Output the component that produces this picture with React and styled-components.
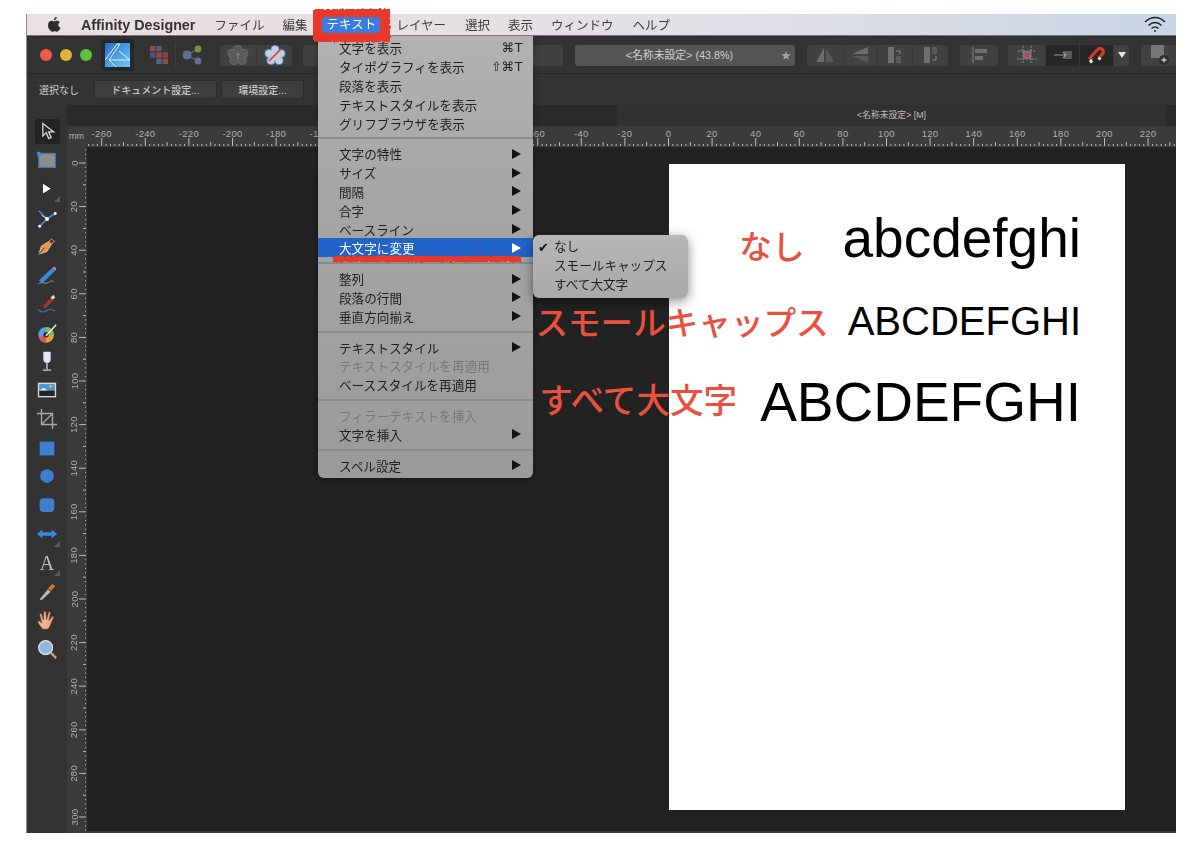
import React from 'react'
import styled, { createGlobalStyle } from 'styled-components'

const SANS = `"Liberation Sans", "Noto Sans CJK JP", sans-serif`

const Global = createGlobalStyle`
  html, body { margin: 0; background: #fff; }
  body { font-family: ${SANS}; }
`

const Screen = styled.div`
  width: 1200px;
  height: 847px;
  padding: 14px 24px 14px 27px;
  box-sizing: border-box;
  overflow: hidden;
  filter: blur(0.3px);
`

const Win = styled.div`
  position: relative;
  display: flex;
  flex-direction: column;
  height: 819px;
  background: #333;
  box-shadow: -1px 0 0 #8c8c8c;
`

/* menu bar */
const MenuBar = styled.div`
  position: relative;
  z-index: 3;
  flex: none;
  display: flex;
  align-items: center;
  height: 21px;
  padding-left: 20px;
  background: linear-gradient(90deg, #eadfe2 0%, #e6dfe4 40%, #e2e0e8 60%, #d6dbe6 80%, #c8d4e6 100%);
  border-bottom: 1px solid #777;
  color: #3a3a3a;
  font-size: 12.5px;
`

const AppName = styled.span`
  margin: 0 19px 0 20px;
  font-size: 14.3px;
  font-weight: 700;
  color: #333;
`

const MenuTitle = styled.span`
  position: relative;
  margin-right: ${p => p.$mr || 18}px;
  white-space: nowrap;
`

const ActiveTitle = styled.span`
  position: relative;
  display: block;
  width: 58px;
  height: 16px;
  margin: 0 16px 0 14px;
  line-height: 16px;
  text-align: center;
  color: #fff;
  background: #3a7be0;
  border-radius: 3px;
  &::before {
    content: '';
    position: absolute;
    inset: -8px -10px -9px -9px;
    z-index: -1;
    background: #e8392b;
    filter: url(#rough);
  }
`

const WifiWrap = styled.span`
  margin-left: auto;
  margin-right: 10px;
  display: flex;
`

/* top toolbar */
const Toolbar = styled.div`
  flex: none;
  display: flex;
  align-items: center;
  height: 38px;
  padding-left: 13px;
  background: #333;
  border-top: 1px solid #2a2a2a;
  border-bottom: 1px solid #2a2a2a;
  box-sizing: border-box;
  overflow: hidden;
`

const Lights = styled.div`
  display: flex;
  gap: 8px;
  margin-right: 9px;
`

const Light = styled.span`
  width: 12px;
  height: 12px;
  border-radius: 50%;
  background: ${p => p.$c};
`

const LogoBox = styled.div`
  display: flex;
  align-items: center;
  justify-content: center;
  width: 33px;
  height: 32px;
  background: #272727;
  border-radius: 3px;
`

const Plain = styled.div`
  display: flex;
  align-items: center;
  justify-content: center;
  width: ${p => p.$w}px;
  margin-left: ${p => p.$ml || 0}px;
`

const VRule = styled.span`
  width: 1px;
  height: 24px;
  margin-left: ${p => p.$ml || 0}px;
  background: #3e3e3e;
`

const Group = styled.div`
  flex: none;
  display: flex;
  height: 21px;
  margin-left: ${p => p.$ml}px;
  border-radius: 3px;
  overflow: hidden;
  background: #414141;
`

const Seg = styled.div`
  display: flex;
  align-items: center;
  justify-content: center;
  width: ${p => p.$w}px;
  background: ${p => (p.$dark ? '#272727' : 'transparent')};
  border-left: ${p => (p.$first ? 'none' : '1px solid #383838')};
  box-sizing: border-box;
`

const DropArrow = styled.span`
  width: 0;
  height: 0;
  border-top: 6px solid #e4e4e4;
  border-left: 4px solid transparent;
  border-right: 4px solid transparent;
`

const TitleBox = styled.div`
  position: relative;
  flex: none;
  width: 220px;
  height: 21px;
  margin-left: 12px;
  padding-right: 11px;
  box-sizing: border-box;
  line-height: 21px;
  text-align: center;
  font-size: 10.8px;
  color: #cfcfcf;
  background: #555;
  border-radius: 3px;
`

const Star = styled.span`
  position: absolute;
  right: 4px;
  top: 0;
  font-size: 10px;
  color: #a4a4a4;
`

/* context bar */
const ContextBar = styled.div`
  flex: none;
  display: flex;
  align-items: center;
  height: 31px;
  padding-left: 12px;
  background: #333;
  font-size: 10px;
  color: #d0d0d0;
`

const ContextLabel = styled.span`
  width: 47px;
`

const ContextBtn = styled.div`
  width: ${p => p.$w}px;
  height: 19px;
  margin-left: ${p => p.$ml}px;
  line-height: 19px;
  text-align: center;
  font-weight: 500;
  color: #c8c8c8;
  background: #3e3e3e;
  border: 1px solid #2c2c2c;
  border-radius: 2px;
  box-sizing: border-box;
`

/* body */
const Body = styled.div`
  flex: 1;
  min-height: 0;
  display: flex;
`

const ToolColumn = styled.div`
  flex: none;
  display: flex;
  flex-direction: column;
  width: 40px;
  padding-top: 12px;
  box-sizing: border-box;
  background: #333;
`

const Tool = styled.div`
  position: relative;
  display: flex;
  align-items: center;
  justify-content: center;
  height: 28.75px;
`

const ToolInner = styled.div`
  display: flex;
  align-items: center;
  justify-content: center;
  width: 25px;
  height: 25px;
  border-radius: 3px;
  background: ${p => (p.$on ? '#232323' : 'transparent')};
`

const Corner = styled.span`
  position: absolute;
  right: 7px;
  bottom: 1px;
  width: 0;
  height: 0;
  border-left: 6px solid transparent;
  border-bottom: 6px solid #5c5c5c;
`

const LetterA = styled.span`
  font-family: "Liberation Serif", serif;
  font-size: 20px;
  line-height: 1;
  color: #bdbdbd;
`

const Main = styled.div`
  flex: 1;
  min-width: 0;
  display: flex;
  flex-direction: column;
`

const TabBar = styled.div`
  flex: none;
  display: flex;
  height: 21px;
  background: #2a2a2a;
`

const TabSpacer = styled.div`
  width: 550px;
`

const Tab = styled.div`
  width: 549px;
  line-height: 21px;
  text-align: center;
  font-size: 8.8px;
  color: #bdbdbd;
  background: #313131;
`

const RulerTop = styled.div`
  flex: none;
  display: flex;
  height: 21px;
  background: #3b3b3b;
`

const RulerUnit = styled.span`
  width: 20px;
  padding: 5px 0 0 2px;
  box-sizing: border-box;
  font-size: 9px;
  color: #b4b4b4;
`

const Work = styled.div`
  flex: 1;
  min-height: 0;
  display: flex;
  border-bottom: 2px solid #3a3a3a;
`

const RulerSide = styled.div`
  flex: none;
  width: 20px;
  background: #3b3b3b;
  overflow: hidden;
`

const Canvas = styled.div`
  flex: 1;
  min-width: 0;
  padding: 17px 0 0 582px;
  background: #222;
`

const Page = styled.div`
  display: flex;
  flex-direction: column;
  width: 456px;
  height: 646px;
  padding: 44px 44px 0 0;
  box-sizing: border-box;
  background: #fff;
`

const Sample = styled.div`
  display: flex;
  flex-direction: row;
  justify-content: flex-end;
  align-items: center;
  margin-top: ${p => p.$mt || 0}px;
  height: ${p => p.$lh}px;
  white-space: nowrap;
`

const Note = styled.span`
  flex: none;
  margin: ${p => p.$shift}px ${p => p.$gap}px 0 0;
  font-family: "Noto Sans CJK JP", sans-serif;
  font-size: ${p => p.$size || 32.6}px;
  font-weight: 500;
  line-height: 1.2;
  color: #e9503f;
`

const SampleText = styled.span`
  flex: none;
  font-size: ${p => p.$size}px;
  line-height: ${p => p.$lh}px;
  color: #000;
`

/* menus */
const Menu = styled.div`
  position: absolute;
  z-index: 2;
  left: 291px;
  top: 22px;
  width: 215px;
  padding: 2.5px 0 3.5px;
  background: linear-gradient(180deg, #b2b2b2 0%, #a6a6a6 35%, #9a9a9a 100%);
  border-radius: 0 0 6px 6px;
  box-shadow: 0 2px 6px rgba(0, 0, 0, 0.35);
  font-size: 12.6px;
  color: #1e1e1e;
`

const Item = styled.div`
  position: relative;
  display: flex;
  align-items: center;
  justify-content: space-between;
  height: 18.8px;
  padding: 0 ${p => (p.$short ? 10 : 12)}px 0 21px;
  color: ${p => (p.$off ? '#787878' : p.$on ? '#fff' : '#1e1e1e')};
  background: ${p => (p.$on ? '#2163c8' : 'transparent')};
`

const Arrow = styled.span`
  width: 0;
  height: 0;
  border-left: 9px solid ${p => (p.$on ? '#fff' : '#111')};
  border-top: 5px solid transparent;
  border-bottom: 5px solid transparent;
`

const Shortcut = styled.span`
  font-family: "DejaVu Sans", "Liberation Sans", sans-serif;
  font-size: 12.5px;
  letter-spacing: 0.5px;
`

const Sep = styled.div`
  height: 12px;
  display: flex;
  align-items: center;
  &::before {
    content: '';
    flex: 1;
    height: 2px;
    background: #8b8b8b;
  }
`

const Scribble = styled.span`
  position: absolute;
  left: 15px;
  right: 12px;
  bottom: -5px;
  height: 6px;
  background: #e8392b;
  filter: url(#rough);
`

const SubMenu = styled.div`
  position: absolute;
  z-index: 2;
  left: 506px;
  top: 221px;
  width: 155px;
  padding: 3px 0;
  background: linear-gradient(180deg, #b6b6b6, #a9a9a9);
  border-radius: 6px;
  box-shadow: 0 3px 12px rgba(0, 0, 0, 0.45);
  font-size: 12.6px;
  color: #1e1e1e;
`

const SubItem = styled.div`
  position: relative;
  height: 19px;
  padding-left: 21px;
  line-height: 19px;
`

const Check = styled.span`
  position: absolute;
  left: 5px;
  top: 0;
  font-family: "DejaVu Sans", sans-serif;
  font-size: 13px;
  color: #111;
`

const Hidden = styled.svg`
  position: absolute;
  width: 0;
  height: 0;
`

const Ic = ({ s = 22, children }) => (
  <svg width={s} height={s} viewBox="0 0 24 24" fill="none">{children}</svg>
)

/* tool icons */
const tools = [
  { on: true, el: <Ic s={20}><path d="M7 3v15l4-4 3 7 3-1-3-7h6z" fill="#2a2a2a" stroke="#ddd" strokeWidth="1.5" /></Ic> },
  { el: <Ic><rect x="3" y="5" width="18" height="15" fill="#8d8d8d" stroke="#3f86d6" strokeWidth="1.6" strokeDasharray="2.4 1.2" /><rect x="1" y="3" width="4" height="4" fill="#3f86d6" /></Ic> },
  { corner: true, el: <Ic s={18}><path d="M6 4v15l12-7.5z" fill="#fff" stroke="#111" strokeWidth="1" /></Ic> },
  { el: <Ic><path d="M3 4l9 9 9-6M12 13l-7 7" stroke="#4f8fd8" strokeWidth="1.5" /><path d="M12 13L6 9" stroke="#ddd" strokeWidth="1" /><circle cx="12" cy="13" r="2.2" fill="#fff" /><circle cx="21" cy="7" r="1.6" fill="#fff" /><circle cx="4" cy="21" r="1.6" fill="#fff" /></Ic> },
  { el: <Ic><path d="M3 21l3-9 8-5 3 3-5 8z" fill="#e8963c" stroke="#d8d8d8" strokeWidth=".8" /><path d="M3 21l6-7" stroke="#333" strokeWidth="1" /><path d="M14 7l3-3 3 3-3 3z" fill="#7d2b20" stroke="#ddd" strokeWidth=".7" /></Ic> },
  { el: <Ic><path d="M3 18L18 4l3 3L7 21z" fill="#3f86d6" /><path d="M18 4l3 3 1-2-2-2z" fill="#e88a9a" /><path d="M2 22c5-4 8 1 12-2s5-1 6 0" stroke="#999" strokeWidth="1" /></Ic> },
  { el: <Ic><path d="M7 15l10-11 3 3-10 10z" fill="#9c3a2a" /><path d="M16 5l3-3 2 3-3 2z" fill="#ddd" /><path d="M4 14c3-1 5 0 5 3l-4 1z" fill="#4a2c20" /><path d="M2 18c4 4 7 3 10 1s6-1 9 1" stroke="#2f6fc0" strokeWidth="1.4" /></Ic> },
  { el: <Ic><circle cx="11" cy="14" r="8.5" fill="#5aa0e0" /><path d="M11 14V5.5A8.5 8.5 0 0 1 19.5 14z" fill="#7cc04a" /><path d="M11 14h8.500A8.500 8.500 0 0 1 11 22.500z" fill="#e8a23c" /><path d="M11 14v8.500A8.500 8.500 0 0 1 3 17z" fill="#d9534f" /><circle cx="11" cy="14" r="3" fill="#333" /><path d="M11 15L22 3" stroke="#eee" strokeWidth="1.5" /></Ic> },
  { el: <Ic><path d="M8 2h8v8c0 3-1.500 4-4 4s-4-1-4-4z" fill="#e6e6f2" /><path d="M12 14v7M7.500 22h9" stroke="#cfcfcf" strokeWidth="1.500" /></Ic> },
  { el: <Ic><rect x="2" y="4" width="20" height="16" fill="#d8d8d8" /><rect x="3.500" y="5.500" width="17" height="7" fill="#4b9ad8" /><circle cx="16" cy="8" r="1.500" fill="#f0c040" /><rect x="3.500" y="12.500" width="17" height="6" fill="#222" /><path d="M3.500 12.500l5-3 4 3z" fill="#dfe9f2" /></Ic> },
  { el: <Ic><path d="M6 1v17h17M1 6h17v17M6 18L18 6" stroke="#a8a8a8" strokeWidth="1.500" /></Ic> },
  { el: <Ic><rect x="4" y="5" width="16" height="15" fill="#3f7fd0" /></Ic> },
  { el: <Ic><circle cx="12" cy="12" r="7.500" fill="#3f7fd0" /></Ic> },
  { el: <Ic><rect x="4" y="4.500" width="16" height="15" rx="4" fill="#3f7fd0" /></Ic> },
  { corner: true, el: <Ic><path d="M1 12l6-5v3h10V7l6 5-6 5v-3H7v3z" fill="#3f86d6" /></Ic> },
  { corner: true, el: <LetterA>A</LetterA> },
  { el: <Ic><path d="M4 21l9-11 3 3-10 9z" fill="#b8b8b8" /><path d="M13 9l5-5 3 3-5 5z" fill="#c9782c" /></Ic> },
  { el: <Ic><path d="M7 22c-2-3-5-6-5-8s2-1 4 1L4 6c0-1.500 2-1.500 2.500 0L8 12 8.500 3.500c0-1.500 2.500-1.500 2.500 0l.5 8 2-7.500c.5-1.500 2.500-1 2.200.5l-1.500 8 3-4c1-1.200 2.500 0 1.800 1.200L15 19c-1 2-2 3-3 3z" fill="#eeb08a" stroke="#5a3a2a" strokeWidth=".7" /></Ic> },
  { el: <Ic><circle cx="10.500" cy="10.500" r="7.500" fill="#8fb8e0" stroke="#ddd" strokeWidth="1.500" /><path d="M16 16l6 6" stroke="#c9a070" strokeWidth="2.500" /></Ic> },
]

/* rulers: 2.18px per unit */
const UNIT = 2.18

// these labels sit wholly behind the open menu
const behindMenu = [-140, -120, -100]

const RulerH = () => {
  const ticks = []
  for (let v = -266; v <= 232; v += 2) {
    const x = 581.5 + v * UNIT
    const h = v % 20 === 0 ? 8 : v % 10 === 0 ? 4 : 2
    ticks.push(<line key={v} x1={x} x2={x} y1={20 - h} y2={20} stroke="#bdbdbd" strokeWidth="1" />)
  }
  const labels = []
  for (let v = -260; v <= 220; v += 20) {
    if (behindMenu.includes(v)) continue
    labels.push(<text key={v} x={581.5 + v * UNIT} y={11} textAnchor="middle" fontSize="9.5" letterSpacing=".3" fill="#b0b0b0" fontFamily="Liberation Sans">{v}</text>)
  }
  return <svg width="1089" height="21">{ticks}{labels}</svg>
}

const RulerV = () => {
  const ticks = []
  for (let v = -6; v <= 310; v += 2) {
    const y = 16 + v * UNIT
    const w = v % 20 === 0 ? 8 : v % 10 === 0 ? 4 : 2
    ticks.push(<line key={v} x1={20 - w} x2={19} y1={y} y2={y} stroke="#bdbdbd" strokeWidth="1" />)
  }
  const labels = []
  for (let v = 0; v <= 300; v += 20) {
    const y = 16 + v * UNIT
    labels.push(<text key={v} x={7} y={y} transform={`rotate(-90 7 ${y})`} dy="3.500" textAnchor="middle" fontSize="9.5" letterSpacing=".3" fill="#b0b0b0" fontFamily="Liberation Sans">{v}</text>)
  }
  return <svg width="20" height="684">{ticks}{labels}</svg>
}

const Logo = () => (
  <svg width="25" height="24" viewBox="0 0 25 24">
    <defs>
      <linearGradient id="lg" x1="0" y1="0" x2="1" y2="1">
        <stop offset="0" stopColor="#2a6ac4" />
        <stop offset="0.55" stopColor="#4da2e6" />
        <stop offset="1" stopColor="#74c6f4" />
      </linearGradient>
    </defs>
    <rect width="25" height="24" fill="url(#lg)" />
    <path d="M0 17L12 1h3L4 17l7 7M4 17h21M14 8l11 9" stroke="#dff0ff" strokeWidth="1" fill="none" />
  </svg>
)

const Persona = () => (
  <svg width="20" height="20" viewBox="0 0 22 22" opacity=".8">
    <rect x="1" y="1" width="6" height="6" fill="#a5524e" />
    <rect x="8" y="1" width="6" height="6" fill="#5a6a8a" />
    <rect x="1" y="8" width="6" height="6" fill="#4f628a" />
    <rect x="8" y="8" width="6" height="6" fill="#b54a42" />
    <rect x="15" y="8" width="6" height="6" fill="#9c4a46" />
    <rect x="8" y="15" width="6" height="6" fill="#5f6f8f" />
    <rect x="15" y="15" width="6" height="6" fill="#a5524e" />
  </svg>
)

const Share = () => (
  <svg width="22" height="20" viewBox="0 0 22 20" opacity=".85">
    <path d="M6 10l11-6M6 10l11 6" stroke="#777" strokeWidth="1.200" />
    <circle cx="6" cy="10" r="4.500" fill="#5f7f9f" />
    <circle cx="17" cy="4" r="3.500" fill="#86a04a" />
    <circle cx="17" cy="16" r="3.500" fill="#6a7aa5" />
  </svg>
)

const PETALS = [[11, 4.5], [17, 8.5], [15, 15.5], [7, 15.5], [5, 8.5]]

const Flower = ({ c, slash }) => (
  <svg width="22" height="20" viewBox="0 0 22 20">
    {PETALS.map(([x, y]) => <circle key={x + '-' + y} cx={x} cy={y} r="4.5" fill={slash ? '#4f8fd8' : '#6a6a6a'} />)}
    {PETALS.map(([x, y]) => <circle key={x + '-' + y} cx={x} cy={y} r="3.6" fill={c} />)}
    <circle cx="11" cy="10.500" r="5" fill={c} />
    {slash
      ? <path d="M5 16L17 4" stroke="#d8402e" strokeWidth="1.600" />
      : <path d="M11 14V8M9 10l2-2 2 2" stroke="#888" strokeWidth="1" fill="none" />}
  </svg>
)

const Bars = ({ v }) => (
  <svg width="20" height="18" viewBox="0 0 20 18">
    {v === 'mirror' && <><path d="M9 2v14H1z" fill="#6e6e6e" /><path d="M11 2v14h8z" fill="#585858" /></>}
    {v === 'flip' && <><path d="M1 8h16V1z" fill="#6e6e6e" /><path d="M1 10h16v7z" fill="#585858" /></>}
    {v === 'rotR' && <><rect x="3" y="1" width="6" height="16" fill="#6e6e6e" /><rect x="11" y="10" width="5" height="7" fill="#5a5a5a" /><path d="M11 5h4v3" stroke="#888" fill="none" /></>}
    {v === 'rotL' && <><rect x="3" y="1" width="6" height="16" fill="#6e6e6e" /><rect x="11" y="1" width="5" height="7" fill="#5a5a5a" /><path d="M15 10v4h-4" stroke="#888" fill="none" /></>}
    {v === 'align' && <><path d="M4 1v16" stroke="#6e6e6e" strokeWidth="1.500" /><rect x="6" y="3" width="12" height="4" fill="#6e6e6e" /><rect x="6" y="10" width="8" height="4" fill="#6e6e6e" /></>}
  </svg>
)

const Snap = () => (
  <svg width="20" height="20" viewBox="0 0 20 20">
    <path d="M0 14h20M6 1v18M14 1v18M1 6h18" stroke="#8a8a8a" strokeWidth="1" strokeDasharray="2 1" />
    <rect x="6" y="6" width="8" height="8" fill="#777" />
    <rect x="8" y="8" width="4" height="4" fill="#e0352b" />
  </svg>
)

const Into = () => (
  <svg width="20" height="12" viewBox="0 0 20 12">
    <rect x="11" y="2" width="8" height="8" fill="#5a5a5a" />
    <path d="M1 6h12M10 3l3 3-3 3" stroke="#999" strokeWidth="1.200" fill="none" />
  </svg>
)

const Magnet = () => (
  <svg width="20" height="20" viewBox="0 0 20 20">
    <path d="M4 17l-2-2 7-8c2-2 4-2 5.500-.5s1 3.500-1 5.500l-3 3" stroke="#d8382c" strokeWidth="3" fill="none" transform="translate(1 -2)" />
    <path d="M3 15l2 2.500M11.500 12.500l2 2" stroke="#eee" strokeWidth="3" />
  </svg>
)

const AddPage = () => (
  <svg width="22" height="22" viewBox="0 0 22 22">
    <rect x="3" y="1" width="13" height="13" fill="#777" />
    <circle cx="16" cy="16" r="5" fill="#2e2e2e" />
    <path d="M13.500 16h5M16 13.500v5" stroke="#ccc" strokeWidth="1.300" />
  </svg>
)

const Wifi = () => (
  <svg width="22" height="17" viewBox="0 0 22 17" fill="none" stroke="#222" strokeWidth="1.400">
    <path d="M1 6c6-6 14-6 20 0M4.500 9.500c4-4 9-4 13 0M7.500 12.500c2-2 5-2 7 0" />
    <circle cx="11" cy="15" r="1" fill="#222" stroke="none" />
  </svg>
)

const AppleMark = () => (
  <svg width="14" height="16" viewBox="0 0 14 16" fill="#2b2b2b">
    <path d="M10.200 3.700c.9 0 2 .5 2.700 1.500-2.200 1.400-1.900 4.500.6 5.500-.5 1.500-2 4-3.400 4-.8 0-1.300-.5-2.300-.5s-1.600.5-2.300.5C3.800 14.700 1 11.500 1 8.200 1 5.300 3 3.800 4.800 3.800c.9 0 1.700.6 2.300.6s1.900-.7 3.100-.7z" />
    <path d="M9.800 0c.1 1.700-1.400 3.300-3 3.200C6.600 1.600 8.300.1 9.800 0z" />
  </svg>
)

const menu = [
  { t: '文字を表示', k: '⌘T' },
  { t: 'タイポグラフィを表示', k: '⇧⌘T' },
  { t: '段落を表示' },
  { t: 'テキストスタイルを表示' },
  { t: 'グリフブラウザを表示' },
  null,
  { t: '文字の特性', a: 1 },
  { t: 'サイズ', a: 1 },
  { t: '間隔', a: 1 },
  { t: '合字', a: 1 },
  { t: 'ベースライン', a: 1 },
  { t: '大文字に変更', a: 1, on: 1 },
  null,
  { t: '整列', a: 1 },
  { t: '段落の行間', a: 1 },
  { t: '垂直方向揃え', a: 1 },
  null,
  { t: 'テキストスタイル', a: 1 },
  { t: 'テキストスタイルを再適用', off: 1 },
  { t: 'ベーススタイルを再適用' },
  null,
  { t: 'フィラーテキストを挿入', off: 1 },
  { t: '文字を挿入', a: 1 },
  null,
  { t: 'スペル設定', a: 1 },
]

export default function App() {
  return (
    <>
      <Global />
      <Hidden>
        <filter id="rough" x="-10%" y="-30%" width="120%" height="160%">
          <feTurbulence type="fractalNoise" baseFrequency="0.35" numOctaves="2" seed="4" />
          <feDisplacementMap in="SourceGraphic" scale="3" />
        </filter>
      </Hidden>
      <Screen>
        <Win>
          <MenuBar>
            <AppleMark />
            <AppName>Affinity Designer</AppName>
            <MenuTitle>ファイル</MenuTitle>
            <MenuTitle $mr={1}>編集</MenuTitle>
            <ActiveTitle>テキスト</ActiveTitle>
            <MenuTitle $mr={19}>レイヤー</MenuTitle>
            <MenuTitle>選択</MenuTitle>
            <MenuTitle>表示</MenuTitle>
            <MenuTitle $mr={19}>ウィンドウ</MenuTitle>
            <MenuTitle>ヘルプ</MenuTitle>
            <WifiWrap><Wifi /></WifiWrap>
          </MenuBar>

          <Toolbar>
            <Lights>
              <Light $c="#f2574e" />
              <Light $c="#e2b33c" />
              <Light $c="#5fc040" />
            </Lights>
            <LogoBox><Logo /></LogoBox>
            <Plain $w={22} $ml={14}><Persona /></Plain>
            <VRule $ml={5} />
            <Plain $w={22} $ml={5}><Share /></Plain>
            <Group $ml={17}>
              <Seg $w={36} $first><Flower c="#5a5a5a" /></Seg>
              <Seg $w={36}><Flower c="#c9cfd8" slash /></Seg>
            </Group>
            <Group $ml={11}><Seg $w={260} $first /></Group>
            <TitleBox>
              &lt;名称未設定&gt; (43.8%)
              <Star>★</Star>
            </TitleBox>
            <Group $ml={12}>
              <Seg $w={36} $first><Bars v="mirror" /></Seg>
              <Seg $w={34}><Bars v="flip" /></Seg>
              <Seg $w={35}><Bars v="rotR" /></Seg>
              <Seg $w={36}><Bars v="rotL" /></Seg>
            </Group>
            <Group $ml={12}><Seg $w={38} $first><Bars v="align" /></Seg></Group>
            <Group $ml={10}>
              <Seg $w={37} $first><Snap /></Seg>
              <Seg $w={34} $dark><Into /></Seg>
              <Seg $w={34} $dark><Magnet /></Seg>
              <Seg $w={16}><DropArrow /></Seg>
            </Group>
            <Group $ml={12}><Seg $w={35} $first><AddPage /></Seg></Group>
          </Toolbar>

          <ContextBar>
            <ContextLabel>選択なし</ContextLabel>
            <ContextBtn $w={123} $ml={8}>ドキュメント設定...</ContextBtn>
            <ContextBtn $w={83} $ml={4}>環境設定...</ContextBtn>
          </ContextBar>

          <Body>
            <ToolColumn>
              {tools.map((tool, i) => (
                <Tool key={i}>
                  <ToolInner $on={tool.on}>{tool.el}</ToolInner>
                  {tool.corner && <Corner />}
                </Tool>
              ))}
            </ToolColumn>
            <Main>
              <TabBar>
                <TabSpacer />
                <Tab>&lt;名称未設定&gt; [M]</Tab>
              </TabBar>
              <RulerTop>
                <RulerUnit>mm</RulerUnit>
                <RulerH />
              </RulerTop>
              <Work>
                <RulerSide><RulerV /></RulerSide>
                <Canvas>
                  <Page>
                    <Sample $lh={60}>
                      <Note $gap={38} $shift={14}>なし</Note>
                      <SampleText $size={55} $lh={60}>abcdefghi</SampleText>
                    </Sample>
                    <Sample $lh={50} $mt={28}>
                      <Note $gap={19} $shift={0}>スモールキャップス</Note>
                      <SampleText $size={40} $lh={50}>ABCDEFGHI</SampleText>
                    </Sample>
                    <Sample $lh={60} $mt={26}>
                      <Note $gap={23} $shift={-6} $size={33.6}>すべて大文字</Note>
                      <SampleText $size={55} $lh={60}>ABCDEFGHI</SampleText>
                    </Sample>
                  </Page>
                </Canvas>
              </Work>
            </Main>
          </Body>

          <Menu>
            {menu.map((m, i) => m === null ? <Sep key={i} /> : (
              <Item key={i} $on={m.on} $off={m.off} $short={!!m.k}>
                {m.t}
                {m.k && <Shortcut>{m.k}</Shortcut>}
                {m.a && <Arrow $on={m.on} />}
                {m.on && <Scribble />}
              </Item>
            ))}
          </Menu>
          <SubMenu>
            <SubItem><Check>✔</Check>なし</SubItem>
            <SubItem>スモールキャップス</SubItem>
            <SubItem>すべて大文字</SubItem>
          </SubMenu>
        </Win>
      </Screen>
    </>
  )
}
